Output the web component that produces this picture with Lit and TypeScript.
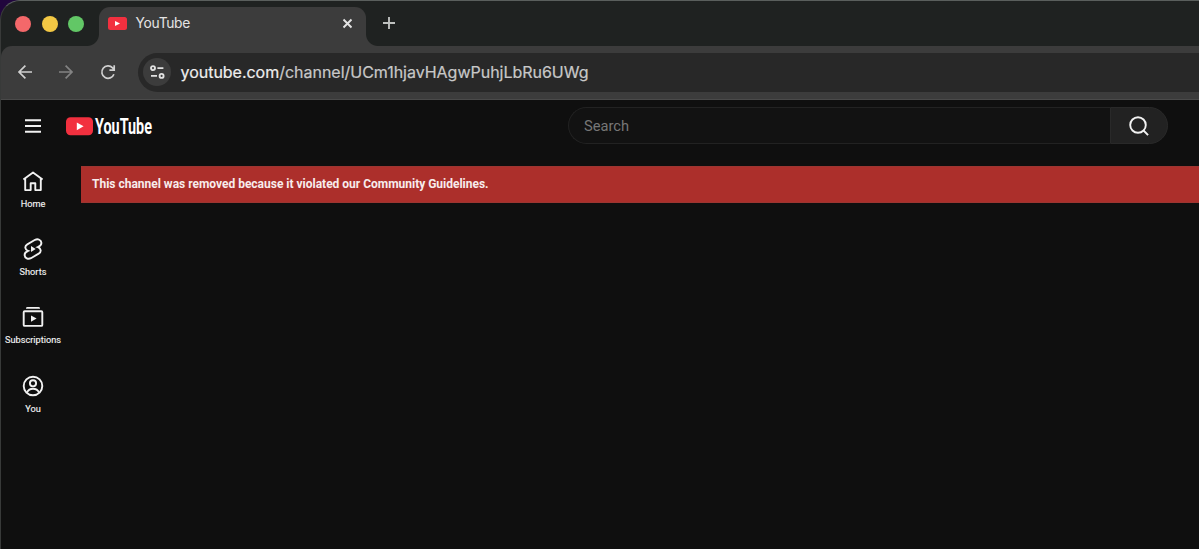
import { LitElement, html, css, svg } from "lit";
import { customElement } from "lit/decorators.js";

const navItems = [
  {
    label: "Home",
    icon: svg`<path d="M2.4 10.4 12 3.5l9.6 6.9M4.2 9.4V21.1h5.5v-6.8h4.6v6.8h5.5V9.4" stroke-linejoin="round"/>`,
  },
  {
    label: "Shorts",
    icon: svg`<path d="M7.1 13.9C3.9 12.7 3.3 9 6.3 7.3L14.1 2.8C17 1.4 20.2 3 20.4 5.9C20.5 8 19 9.3 16.9 10.2C20.1 11.3 20.7 15 17.7 16.7L9.9 21.2C7.1 22.7 3.8 21 3.6 18.1C3.5 16.2 4.9 14.8 7.1 13.9Z"/><path d="M10 9.1v5.9l4.7-2.9Z" fill="currentColor" stroke="none"/>`,
  },
  {
    label: "Subscriptions",
    icon: svg`<rect x="2.7" y="6.3" width="18.6" height="14.6" rx="1"/><path d="M5 3.4Q5 2 6.4 2H17.6Q19 2 19 3.4V3.8H5Z" fill="currentColor" stroke="none"/><path d="M10 10.4v6.4l5.6-3.2Z" fill="currentColor" stroke="none"/>`,
  },
  {
    label: "You",
    icon: svg`<circle cx="12" cy="12" r="9.3"/><circle cx="12" cy="9.3" r="3.1"/><path d="M5.9 18.6C7.4 15.6 9.5 14.8 12 14.8S16.6 15.6 18.1 18.6"/>`,
  },
];

@customElement("app-root")
export class AppRoot extends LitElement {
  static styles = css`
    :host { display: block; height: 549px; background: #21063d; overflow: hidden; }
    * { box-sizing: border-box; }
    svg { display: block; flex: none; fill: none; stroke: currentColor; stroke-width: 1.9; overflow: visible; }
    .window {
      height: 560px; width: 1240px; overflow: hidden; border: 1px solid #5a5f5d;
      border-left-color: #383a39; border-radius: 20px 0 0 0; background: #1f2221;
      font-family: Roboto, sans-serif; display: flex; flex-direction: column;
    }
    .tabs { height: 45px; flex: none; display: flex; align-items: flex-end; }
    .lights { width: 98px; height: 45px; display: flex; gap: 10.5px; align-items: center; padding-left: 14px; }
    .light { width: 16px; height: 16px; border-radius: 50%; }
    .red { background: #f4686a; }
    .yellow { background: #f3c844; }
    .green { background: #62c766; }
    .tab {
      position: relative; width: 267px; height: 39px; background: #3c3c3c; border-radius: 11px 11px 0 0;
      display: flex; align-items: center; padding: 0 12px 7px 9px; color: #e4e4e4;
      font: 13.8px/20px Inter, sans-serif;
    }
    .tab::before, .tab::after { content: ""; position: absolute; bottom: 0; width: 12px; height: 12px; }
    .tab::before { left: -12px; background: radial-gradient(circle at 0 0, transparent 11.5px, #3c3c3c 12.5px); }
    .tab::after { right: -12px; background: radial-gradient(circle at 100% 0, transparent 11.5px, #3c3c3c 12.5px); }
    .tab-title { margin-left: 8.5px; flex: 1; letter-spacing: -0.3px; }
    .new-tab { width: 12px; height: 12px; margin: 0 0 17px 17px; color: #bec1bf; }
    .toolbar {
      height: 54px; flex: none; background: #3c3c3c; border-bottom: 1px solid #4a4a4a;
      border-radius: 11px 0 0 0; display: flex; align-items: center; color: #d0d0d0;
    }
    .nav-buttons { width: 137px; display: flex; align-items: center; padding: 0 0 1px 17px; gap: 27.3px; }
    .nav-buttons svg { stroke-width: 1.7; }
    .dim { color: #838383; }
    .address {
      height: 39px; flex: 1; background: #282828; border-radius: 20px 0 0 20px;
      display: flex; align-items: center; padding: 0 0 1px 5px; color: #c8c8c8;
      font: 16px/24px Inter, sans-serif;
    }
    .site-info { width: 28px; height: 28px; border-radius: 50%; background: #3c3c3c; display: grid; place-items: center; color: #e2e2e2; }
    .url { margin-left: 9.5px; white-space: nowrap; letter-spacing: -0.02px; -webkit-text-stroke: 0.2px; }
    .host { color: #efefef; }
    .page { flex: 1; background: #0f0f0f; color: #f1f1f1; }
    .masthead { height: 52px; display: flex; align-items: center; width: 1198px; }
    .menu { margin-left: 23px; }
    .logo { margin-left: 24px; }
    .wordmark { font: 700 22px Roboto, sans-serif; fill: #fff; stroke: none; }
    .search { margin: 0 31px 1px auto; width: 600px; height: 37px; display: flex; }
    .field {
      flex: 1; border: 1px solid #222; border-right: 0; border-radius: 19px 0 0 19px; background: #121212;
      padding: 1px 0 0 15px; color: #777; font: 14.7px/35px Roboto, sans-serif;
    }
    .search-button { width: 58px; background: #222; border: 1px solid #292929; border-radius: 0 19px 19px 0; display: grid; place-items: center; }
    .body { display: flex; }
    .rail { width: 80px; padding-top: 3px; }
    .item { width: 64px; height: 68.2px; display: flex; flex-direction: column; align-items: center; padding-top: 14px; font: 9.2px/12px Roboto, sans-serif; gap: 5px; -webkit-text-stroke: 0.15px; }
    .alert { flex: 1; margin-top: 14px; height: 37px; background: #ac2f2b; border: 1px solid #9d3531; border-left: 0; padding-left: 11px; font: 700 12px/35px Roboto, sans-serif; letter-spacing: -0.01px; color: #f8ecec; white-space: nowrap; }
  `;

  render() {
    return html`
      <div class="window">
        <div class="tabs">
          <div class="lights"><i class="light red"></i><i class="light yellow"></i><i class="light green"></i></div>
          <div class="tab">
            <svg width="19" height="13" viewBox="0 0 19 13"><rect width="19" height="13" rx="2.5" fill="#f2303f" stroke="none"/><path d="M7 4v5l5-2.5Z" fill="#fff" stroke="none"/></svg>
            <span class="tab-title">YouTube</span>
            <svg width="13" height="13" viewBox="0 0 13 13"><path d="m2.5 2.5 8 8m0-8-8 8"/></svg>
          </div>
          <svg class="new-tab" viewBox="0 0 12 12"><path d="M6 0v12M0 6h12"/></svg>
        </div>
        <div class="toolbar">
          <div class="nav-buttons">
            <svg width="14" height="14" viewBox="0 0 14 14"><path d="M14 7H1m6.4-6.3L1 7l6.4 6.3"/></svg>
            <svg class="dim" width="14" height="14" viewBox="0 0 14 14"><path d="M0 7h13M6.6.7 13 7l-6.4 6.3"/></svg>
            <svg width="14" height="14" viewBox="0 0 14 14"><path d="M12.9 9.2A6.2 6.2 0 1 1 11.6 2.9l1.6 1.9M13.2.2v4.9H8.4"/></svg>
          </div>
          <div class="address">
            <span class="site-info">
              <svg width="15" height="14" viewBox="0 0 15 14"><circle cx="3" cy="3.1" r="2"/><path d="M7.4 3.1h6M1 10.9h6"/><circle cx="11.6" cy="10.9" r="2"/></svg>
            </span>
            <span class="url"><span class="host">youtube.com</span>/channel/UCm1hjavHAgwPuhjLbRu6UWg</span>
          </div>
        </div>
        <div class="page">
          <div class="masthead">
            <svg class="menu" width="18" height="14" viewBox="0 0 18 14"><path d="M1 1.2h16M1 7h16M1 12.8h16"/></svg>
            <svg class="logo" width="87" height="19" viewBox="0 0 87 19">
              <rect x="0" y="0.3" width="27" height="18" rx="4.5" fill="#f2303f" stroke="none"/>
              <path d="M10.8 5.4v7.8l6.8-3.9Z" fill="#fff" stroke="none"/>
              <text class="wordmark" x="29" y="17" textLength="57" lengthAdjust="spacingAndGlyphs">YouTube</text>
            </svg>
            <div class="search">
              <div class="field">Search</div>
              <div class="search-button"><svg width="20" height="20" viewBox="0 0 20 20"><circle cx="9" cy="9" r="7.8"/><path d="m14.5 14.5 4.6 4.6"/></svg></div>
            </div>
          </div>
          <div class="body">
            <nav class="rail">
              ${navItems.map((n) => html`<div class="item"><svg width="24" height="24" viewBox="0 0 24 24">${n.icon}</svg><span>${n.label}</span></div>`)}
            </nav>
            <div class="alert">This channel was removed because it violated our Community Guidelines.</div>
          </div>
        </div>
      </div>
    `;
  }
}
